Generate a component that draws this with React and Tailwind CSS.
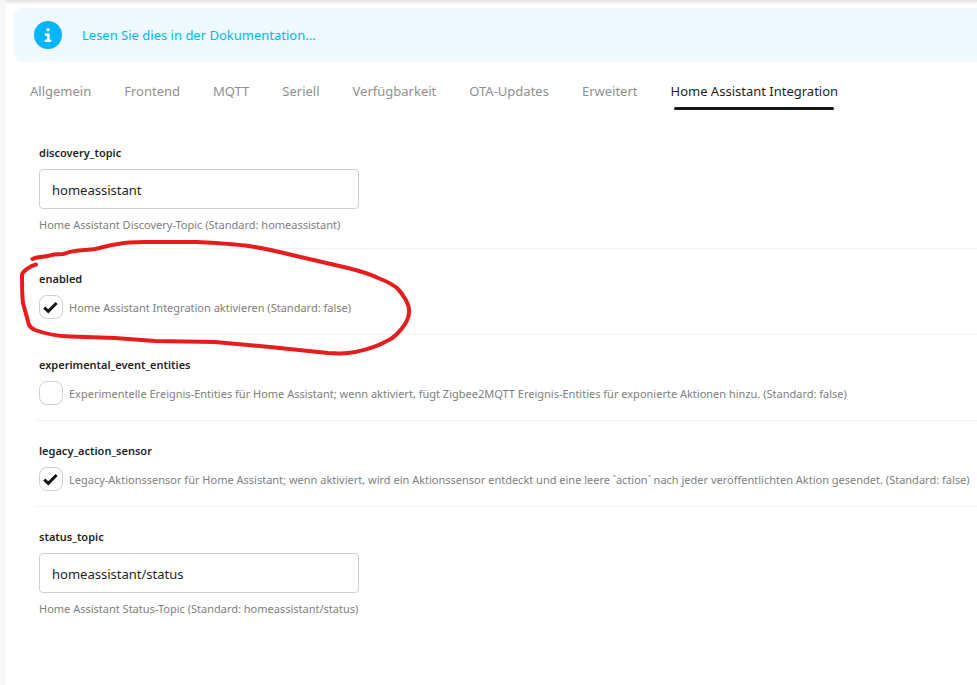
import { FaCircleInfo } from "react-icons/fa6";

const tabs = [
  "Allgemein",
  "Frontend",
  "MQTT",
  "Seriell",
  "Verfügbarkeit",
  "OTA-Updates",
  "Erweitert",
  "Home Assistant Integration",
];

function Tab({ label, active }) {
  return (
    <button
      type="button"
      role="tab"
      aria-selected={active}
      className={
        active
          ? "flex flex-col items-center px-4 text-[#1f1f1f]"
          : "flex flex-col items-center px-4 text-[#8f8f8f]"
      }
    >
      <span className="h-10 leading-10">{label}</span>
      {/* the bar covers 80% of the whole tab */}
      {active && <span className="-mt-1 h-[3px] w-40 rounded-sm bg-[#171717]" />}
    </button>
  );
}

function TextField({ name, value, help }) {
  return (
    <div className="flex flex-col px-1 pt-[22px] pb-[15px]">
      <label htmlFor={name} className="mb-2 text-[11px] leading-4 font-semibold text-[#1f1f1f]">
        {name}
      </label>
      <input
        id={name}
        type="text"
        defaultValue={value}
        className="h-10 w-80 rounded border border-[#d1d1d1] bg-white px-3 pt-0.5 text-[13px] text-[#1f1f1f]"
      />
      <p className="mt-2 text-[11px] leading-4 text-[#808080]">{help}</p>
    </div>
  );
}

function CheckField({ name, checked, help }) {
  return (
    <div className="flex flex-col px-1 pt-[22px] pb-[15px]">
      <label htmlFor={name} className="mb-2 text-[11px] leading-4 font-semibold text-[#1f1f1f]">
        {name}
      </label>
      <div className="flex items-center gap-[6px]">
        <span className="grid shrink-0">
          <input
            id={name}
            type="checkbox"
            defaultChecked={checked}
            className="peer col-start-1 row-start-1 size-6 appearance-none rounded-lg border border-[#d1d1d1] bg-white"
          />
          <svg
            viewBox="0 0 24 24"
            className="pointer-events-none invisible col-start-1 row-start-1 size-6 peer-checked:visible"
            fill="none"
            stroke="#171717"
            strokeWidth="3"
          >
            <path d="M5.2 12.6 9.3 16.4 17.6 8" />
          </svg>
        </span>
        <label htmlFor={name} className="pt-0.5 text-[11px] leading-4 whitespace-nowrap text-[#808080]">
          {help}
        </label>
      </div>
    </div>
  );
}

export default function App() {
  return (
    <div className="relative min-h-screen overflow-hidden border-l-[6px] border-[#f7f7f7] bg-white font-['Noto_Sans',sans-serif]">
      <div className="h-[2px] bg-[#e5e5e5] shadow-sm" />
      <main className="pt-[6px] pl-2">
        <div className="flex h-[54px] items-center gap-5 rounded-l-lg bg-[#f0f9ff] pl-5 text-[#00b5ff]">
          <FaCircleInfo className="size-7" />
          <a href="#docs" className="text-[13px] leading-5">
            Lesen Sie dies in der Dokumentation...
          </a>
        </div>

        <div role="tablist" className="mt-[9px] flex h-10 gap-px text-[13px] whitespace-nowrap">
          {tabs.map((label) => (
            <Tab key={label} label={label} active={label === "Home Assistant Integration"} />
          ))}
        </div>

        <form className="mt-3 ml-[21px] divide-y divide-[#f2f2f2]">
          <TextField
            name="discovery_topic"
            value="homeassistant"
            help="Home Assistant Discovery-Topic (Standard: homeassistant)"
          />
          <CheckField
            name="enabled"
            checked
            help="Home Assistant Integration aktivieren (Standard: false)"
          />
          <CheckField
            name="experimental_event_entities"
            help="Experimentelle Ereignis-Entities für Home Assistant; wenn aktiviert, fügt Zigbee2MQTT Ereignis-Entities für exponierte Aktionen hinzu. (Standard: false)"
          />
          <CheckField
            name="legacy_action_sensor"
            checked
            help="Legacy-Aktionssensor für Home Assistant; wenn aktiviert, wird ein Aktionssensor entdeckt und eine leere `action` nach jeder veröffentlichten Aktion gesendet. (Standard: false)"
          />
          <TextField
            name="status_topic"
            value="homeassistant/status"
            help="Home Assistant Status-Topic (Standard: homeassistant/status)"
          />
        </form>
      </main>

      {/* hand-drawn marker around the "enabled" setting */}
      <svg
        viewBox="0 0 404 120"
        className="pointer-events-none absolute top-[238px] left-1 h-[120px] w-[404px]"
        fill="none"
        stroke="#e81c1c"
        strokeWidth="4"
        strokeLinecap="round"
        strokeLinejoin="round"
      >
        <path d="M22.500 21C26 19 34 19 38 18C43 16 48 16 53 16C58 15 61 13 65 13C72 12 79 12 85 11C94 9 100 7 108 6C117 4 126 4 135 4L185 4C206 5 228 6 245 9C258 11 270 14 282 17L338 30C350 33 360 36 368 40C376 43 382 46 387 50C393 56 399 66 399 72C400 81 394 89 387 96C384 99 380 102 375 104C364 110 348 114 338 115C330 116 325 115 318 115L260 109L205 104L145 103L105 100L60 98.500C47 98 33 95 25 92C21 90 20 89 19 87L13 65C12 57 12 47 12 37C12 34 20 28 26 26.500" />
      </svg>
    </div>
  );
}
